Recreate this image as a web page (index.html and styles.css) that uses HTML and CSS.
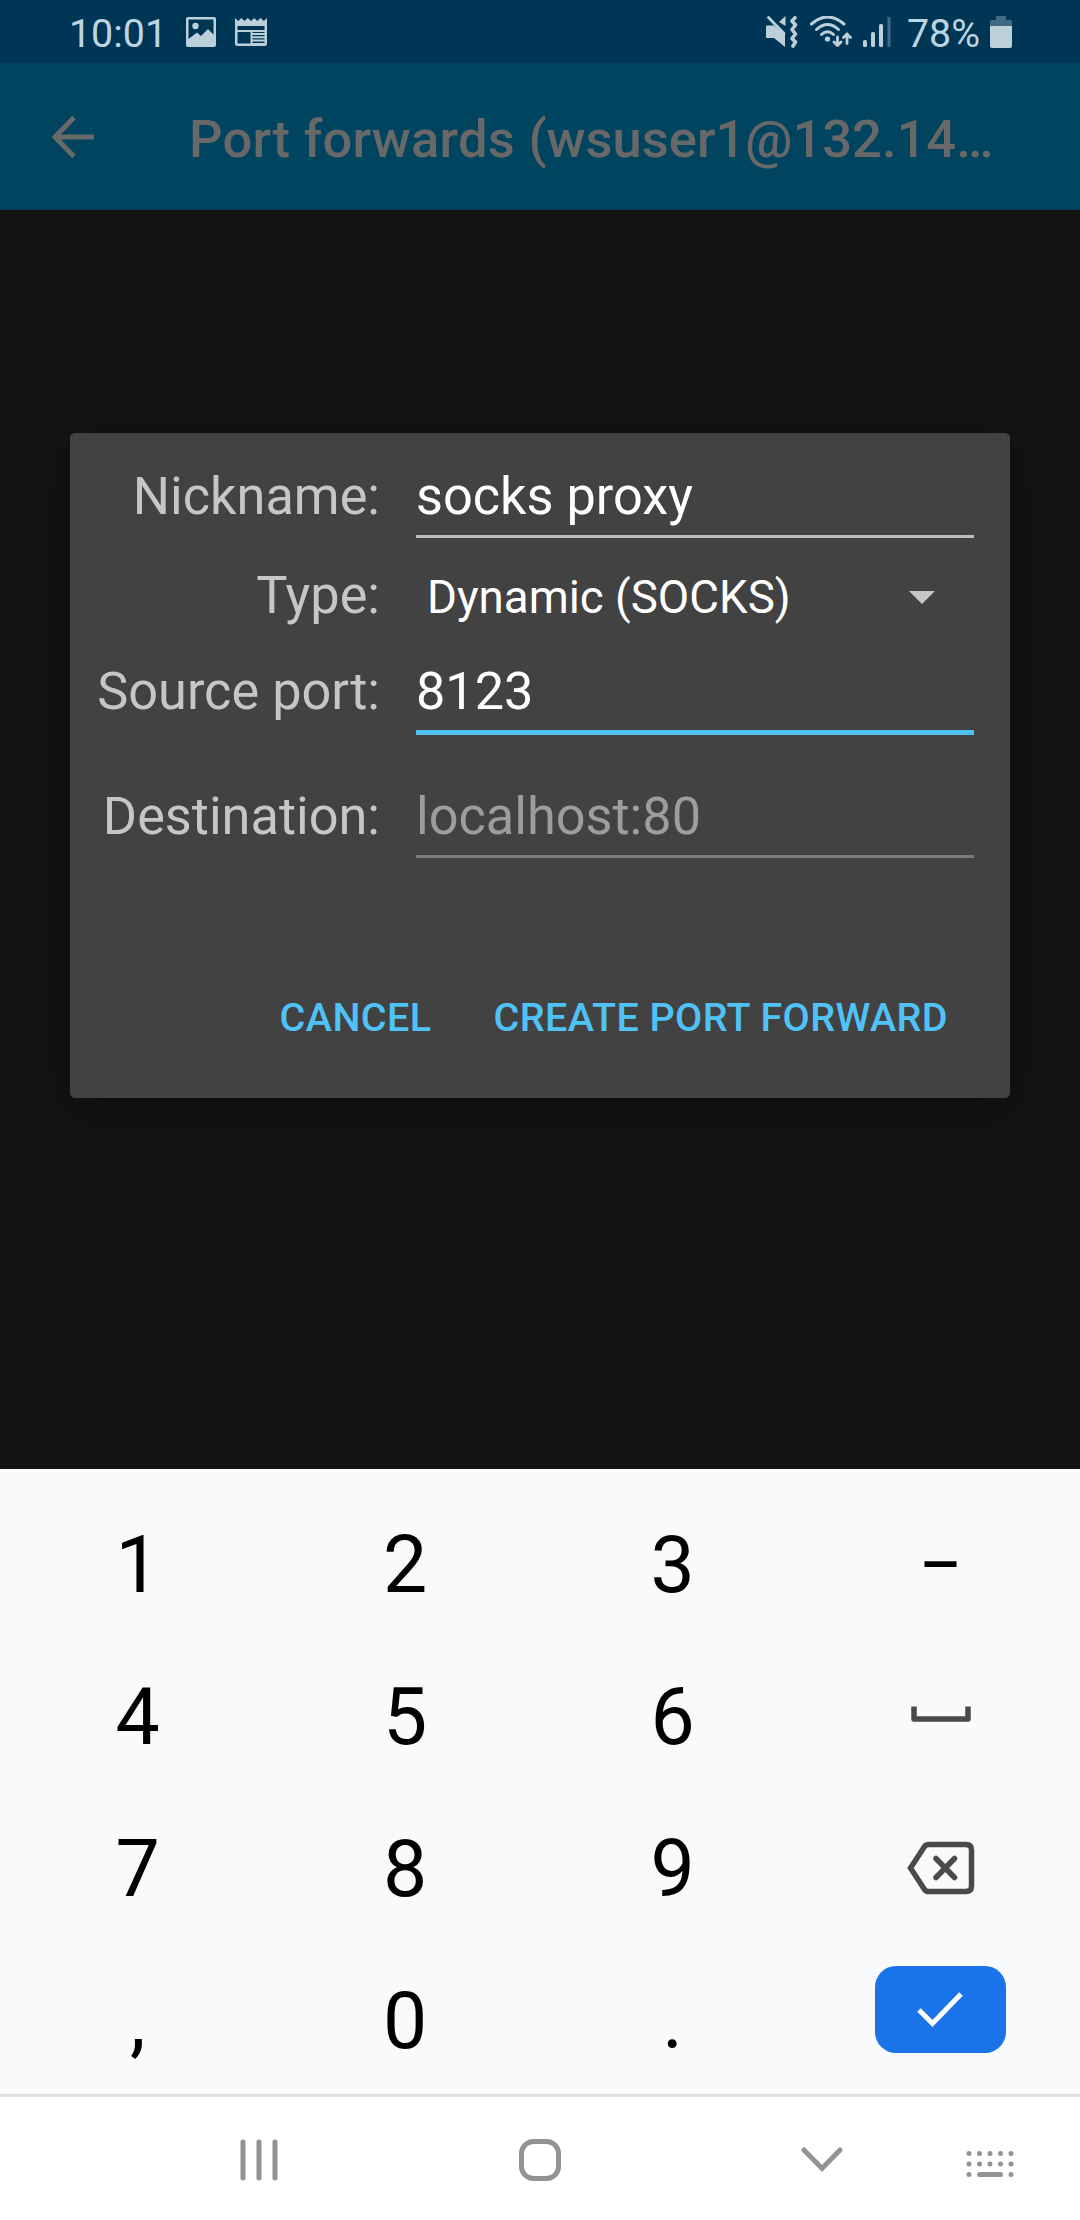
FILE: index.html
```html
<!DOCTYPE html>
<html lang="en">
<head>
<meta charset="utf-8">
<title>Port forwards</title>
<link rel="stylesheet" href="styles.css">
</head>
<body>
<div class="screen">
  <div class="status">
    <span class="time">10:01</span>
    <svg class="icon-image" width="30" height="30" viewBox="0 0 30 30"><path fill-rule="evenodd" d="M2 0H28Q30 0 30 2V28Q30 30 28 30H2Q0 30 0 28V2Q0 0 2 0ZM2.500 2.500V22L11 15.500L15 19L22 12L27.500 17.500V2.500Z"/><circle cx="9.500" cy="9" r="3.200"/></svg>
    <svg class="icon-news" width="32" height="28" viewBox="0 0 32 28"><path fill-rule="evenodd" d="M0 0L3.200 3L6.400 0L9.600 3L12.800 0L16 3L19.200 0L22.400 3L25.600 0L28.800 3L32 0V25.500Q32 28 29.500 28H2.500Q0 28 0 25.500ZM2.500 8V12H29.500V8ZM2.500 14V25.500H15.500V14ZM17.500 14V15H29.500V14ZM17.500 17V18.300H29.500V17ZM17.500 20.300V21.600H29.500V20.300ZM17.500 23.600V25H29.500V23.600Z"/></svg>
    <span class="spacer"></span>
    <svg class="icon-mute" width="32" height="32" viewBox="0 0 32 32"><path d="M1 9.500H8L19 18V31L8 22H1Q0 22 0 21V10.500Q0 9.500 1 9.500Z"/><path d="M13 6L19.500 0V10Z"/><path class="line" stroke-width="2.800" d="M2.500 1.500L18 17.500"/><path class="line" stroke-width="3.600" d="M29 1.800L26 5L29.500 9L26 13.500L29.500 18L26 22.500L29.500 26L27 30"/></svg>
    <svg class="icon-wifi" width="42" height="32" viewBox="0 0 42 32"><g class="line" stroke-width="3"><path d="M1.500 8Q17.500-6 34 8"/><path d="M6.500 13.500Q17.500 3.500 28.500 13.500"/><path d="M11.500 18.500Q17.500 13 23.500 18.500"/><path stroke-width="2.800" d="M27.500 21V29.500M24 26L27.500 29.500L31 26M37 27.500V18M33.500 21.500L37 18L40.500 21.500"/></g><circle cx="17.500" cy="23" r="2.600"/></svg>
    <svg class="icon-signal" width="28" height="30" viewBox="0 0 28 30"><rect y="23" width="4" height="7" rx="1.500"/><rect x="8" y="15" width="4" height="15" rx="1.500"/><rect x="16" y="7" width="4" height="23" rx="1.500"/><rect class="dim" x="24.500" width="3" height="30"/></svg>
    <span class="percent">78%</span>
    <svg class="icon-battery" width="22" height="32" viewBox="0 0 22 32"><path class="dim" d="M6 0H16V4H20Q22 4 22 6V11H0V6Q0 4 2 4H6Z"/><path d="M0 10H22V30Q22 32 20 32H2Q0 32 0 30Z"/></svg>
  </div>
  <div class="appbar">
    <svg class="back" width="44" height="44" viewBox="0 0 44 44"><path d="M42 22H4M22 2.500L3 22L22 41.500"/></svg>
    <div class="title"><span class="name">Port forwards </span>(wsuser1@132.14…</div>
  </div>
  <div class="content">
    <div class="dialog">
      <div class="row first"><label>Nickname:</label><div class="field">socks proxy</div></div>
      <div class="row type"><label>Type:</label><div class="select"><span>Dynamic (SOCKS)</span><svg width="26" height="13" viewBox="0 0 26 13"><path d="M0 0H26L13 13Z"/></svg></div></div>
      <div class="row port"><label>Source port:</label><div class="field active">8123</div></div>
      <div class="row dest"><label>Destination:</label><div class="field hint">localhost:80</div></div>
      <div class="actions"><span>CANCEL</span><span>CREATE PORT FORWARD</span></div>
    </div>
  </div>
  <div class="keyboard">
    <span class="key">1</span><span class="key">2</span><span class="key">3</span><span class="key minus">−</span>
    <span class="key">4</span><span class="key">5</span><span class="key">6</span>
    <span class="key space"><svg width="60" height="16" viewBox="0 0 60 16"><path d="M3 0.500V13H57V0.500"/></svg></span>
    <span class="key">7</span><span class="key">8</span><span class="key">9</span>
    <span class="key erase"><svg width="68" height="54" viewBox="0 0 68 54"><path d="M21.500 3.500H59Q64.500 3.500 64.500 9V45Q64.500 50.500 59 50.500H21.500Q19 50.500 17.500 48.500L3.500 27L17.500 5.500Q19 3.500 21.500 3.500Z"/><path d="M29 17.500L47.500 36.500M47.500 17.500L29 36.500"/></svg></span>
    <span class="key">,</span><span class="key">0</span><span class="key">.</span>
    <span class="key enter"><span class="enter-button"><svg width="48" height="38" viewBox="0 0 48 38"><path d="M3 19L16.500 32.500L45 3"/></svg></span></span>
  </div>
  <div class="navbar">
    <svg class="recents" width="38" height="42" viewBox="0 0 38 42"><path d="M3 3V39M19 3V39M35 3V39"/></svg>
    <svg class="home" width="44" height="44" viewBox="0 0 44 44"><rect x="3.500" y="3.500" width="37" height="37" rx="12"/></svg>
    <svg class="hide" width="42" height="26" viewBox="0 0 42 26"><path d="M3 3L21 21.500L39 3"/></svg>
    <svg class="switch" width="48" height="28" viewBox="0 0 48 28"><path d="M3 3.500h0M13.500 3.500h0M24 3.500h0M34.500 3.500h0M45 3.500h0M3 14h0M13.500 14h0M24 14h0M34.500 14h0M45 14h0M3 24.500h0M13.500 24.500H34.500M45 24.500h0"/></svg>
  </div>
</div>
</body>
</html>
```
FILE: styles.css
```css
* { box-sizing: border-box; }
body { margin: 0; font-family: Roboto, "Liberation Sans", sans-serif; }
svg { display: block; flex: none; }
.screen { width: 1080px; height: 2220px; display: flex; flex-direction: column; background: #131313; overflow: hidden; }
.status { height: 63px; flex: none; display: flex; align-items: center; background: #003655; color: #bcd5e2; font-size: 39.375px; line-height: 58px; padding: 0 68px 0 69px; }
.status svg { fill: #bcd0dc; }
.status .line { fill: none; stroke: #bcd0dc; stroke-linecap: round; stroke-linejoin: round; }
.status .dim { fill: #426b83; }
.time, .percent { padding-top: 4px; }
.time { width: 117px; }
.spacer { flex: 1; }
.icon-news { margin-left: 19px; }
.icon-mute { margin-right: 12px; }
.icon-wifi { margin-right: 11px; }
.icon-signal { margin-right: 16px; }
.percent { width: 83px; }
.appbar { height: 147px; flex: none; display: flex; align-items: center; background: #004460; padding-left: 52px; }
.back { fill: none; stroke: #686a6a; stroke-width: 5px; margin-right: 93px; }
.title { color: #686868; font-size: 52.5px; font-weight: 500; line-height: 62px; padding-top: 4px; white-space: nowrap; }
.name { letter-spacing: .27px; }
.content { height: 1259px; flex: none; padding: 223px 70px 0; }
.dialog { height: 665px; padding-top: 22px; border-radius: 5px; background: #424242; color: #fff; font-size: 52.25px; box-shadow: 0 12px 40px rgba(0, 0, 0, .25); }
.row { height: 83px; display: grid; grid-template-columns: 310px 558px; column-gap: 36px; line-height: 83px; white-space: nowrap; }
label { text-align: right; color: #c6c6c6; }
.field { border-bottom: 3px solid #bdbdbd; height: 83px; }
.type { height: 110px; margin-top: 2px; line-height: 110px; }
.type label { padding-top: 1px; height: 110px; }
.select { display: flex; align-items: center; padding: 3px 39px 0 11px; font-size: 45.7px; justify-content: space-between; }
.select svg { fill: #c6c6c6; margin-bottom: 1px; }
.port { height: 85px; }
.active { height: 85px; border-bottom: 5px solid #4fc0f0; }
.dest { margin-top: 40px; }
.hint { color: #9d9d9d; border-color: #7b7b7b; }
.actions { display: flex; justify-content: flex-end; gap: 62px; margin-top: 130px; padding-right: 62px; color: #4fc3f7; font-size: 39.5px; font-weight: 500; letter-spacing: .42px; line-height: 60px; white-space: nowrap; }
.keyboard { height: 628px; flex: none; display: grid; grid-template-columns: repeat(4, 1fr); grid-template-rows: repeat(4, 152px); padding: 20px 6px 0 4px; background: #f9fafc; box-shadow: inset 0 -3px #dddfe1; color: #000; font-size: 78.75px; line-height: 152px; }
.key { display: flex; align-items: center; justify-content: center; height: 152px; }
.key path { fill: none; stroke: #4a4a4a; stroke-width: 5.500px; }
.space { padding: 0 0 6px 2px; }
.space path { stroke-linejoin: round; }
.erase { padding: 0 0 2px 1px; }
.erase path { stroke-linecap: round; }
.enter { padding-bottom: 23px; }
.enter-button { width: 131px; height: 87px; border-radius: 21px; background: #1a73e8; display: flex; align-items: center; justify-content: center; }
.key .enter-button path { stroke: #fff; stroke-width: 5px; }
.navbar { height: 123px; flex: none; display: flex; align-items: center; background: #fff; padding: 3px 0 0 240px; }
.navbar svg { fill: none; stroke: #939393; stroke-width: 5px; stroke-linecap: round; }
.home { margin-left: 240px; }
.hide { margin-left: 239px; }
.switch { margin: 7px 0 0 123px; }
```
